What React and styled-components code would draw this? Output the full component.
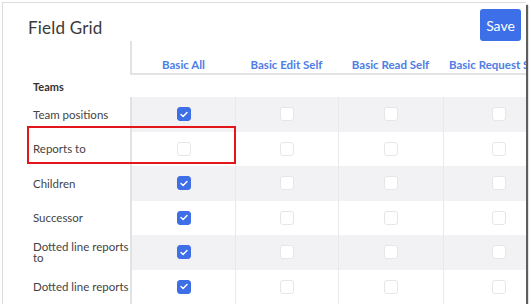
import React from 'react';
import styled, {createGlobalStyle} from "styled-components";

const GlobalStyle = createGlobalStyle`
    html, body {
        margin: 0;
        background: #fff;
    }
    body {
        font-family: "Lato", "Open Sans", sans-serif;
    }
`;

const Frame = styled.div`
    margin: 2px 0 0 2px;
    width: 524px;
    height: 302px;
    border-top: 1px solid #dcdcdc;
    border-left: 1px solid #dcdcdc;
    box-shadow: 2px 3px 1px rgba(40, 40, 40, 0.75);
    background: #fff;
    overflow: hidden;
    position: relative;
    box-sizing: border-box;
`;

const TopBar = styled.div`
    display: flex;
    align-items: flex-start;
    justify-content: space-between;
    height: 38px;
    padding: 6px 5px 0 25px;
    box-sizing: border-box;
`;

const Title = styled.h1`
    margin: 8px 0 0;
    font-size: 17px;
    font-weight: 400;
    color: #3a3a3a;
    letter-spacing: 0.2px;
`;

const SaveButton = styled.button`
    width: 41px;
    height: 32px;
    border: none;
    border-radius: 3px;
    background: #3c6fe8;
    color: #fff;
    font-family: inherit;
    font-size: 14px;
    padding: 0;
`;

const Grid = styled.div`
    display: grid;
    grid-template-columns: 127px 105px 103px 105px 110px;
`;

const HeadCell = styled.div`
    height: 34px;
    display: flex;
    align-items: flex-end;
    justify-content: ${p => (p.$last ? "flex-start" : "center")};
    padding: 0 0 2px ${p => (p.$last ? "6px" : "0")};
    box-sizing: border-box;
    font-size: 11.5px;
    font-weight: 700;
    color: #4d7de6;
    white-space: nowrap;
    border-bottom: ${p => (p.$blank ? "none" : "2px solid #e4e4e6")};
    border-left: ${p => (p.$first ? "2px solid #e2e2e2" : "none")};
    overflow: hidden;
`;

const SectionLabel = styled.div`
    grid-column: 1 / -1;
    height: 22px;
    display: flex;
    align-items: center;
    padding-left: 30px;
    font-size: 11px;
    font-weight: 700;
    color: #333;
`;

const Label = styled.div`
    height: 34.5px;
    display: flex;
    align-items: center;
    padding-left: 30px;
    box-sizing: border-box;
    font-size: 11.5px;
    line-height: 11px;
    color: #444;
    span {
        max-width: 96px;
    }
`;

const Cell = styled.div`
    height: 34.5px;
    display: flex;
    align-items: center;
    justify-content: center;
    background: ${p => (p.$shade ? "#f2f2f4" : "#fff")};
    border-left: ${p => (p.$first ? "2px solid #e2e2e2" : "1px solid #e9e9eb")};
    box-sizing: border-box;
`;

const Box = styled.div`
    width: 14px;
    height: 14px;
    border-radius: 3px;
    box-sizing: border-box;
    background: ${p => (p.$on ? "#3f6fe6" : "#fff")};
    border: 1px solid ${p => (p.$on ? "#3f6fe6" : "#e6e6e8")};
    display: flex;
    align-items: center;
    justify-content: center;
`;

const Highlight = styled.div`
    position: absolute;
    left: 24px;
    top: 123px;
    width: 209px;
    height: 38px;
    border: 2px solid #e5161b;
    box-sizing: border-box;
    pointer-events: none;
`;

const columns = ["Basic All", "Basic Edit Self", "Basic Read Self", "Basic Request Self"];

const rows = [
    {label: "Team positions", on: true},
    {label: "Reports to", on: false},
    {label: "Children", on: true},
    {label: "Successor", on: true},
    {label: "Dotted line reports to", on: true},
    {label: "Dotted line reports", on: true},
];

const Check = () => (
    <svg width="8" height="7" viewBox="0 0 8 7">
        <path d="M1 3.6 L3.1 5.6 L7 1.4" fill="none" stroke="#fff" strokeWidth="1.4" strokeLinecap="round" strokeLinejoin="round"/>
    </svg>
);

const App = () => (
    <>
        <GlobalStyle/>
        <Frame>
            <TopBar>
                <Title>Field Grid</Title>
                <SaveButton>Save</SaveButton>
            </TopBar>
            <Grid>
                <HeadCell $blank/>
                {columns.map((c, i) => (
                    <HeadCell key={c} $first={i === 0} $last={i === columns.length - 1}>{c}</HeadCell>
                ))}
                <SectionLabel>Teams</SectionLabel>
                {rows.map((r, ri) => (
                    <React.Fragment key={r.label}>
                        <Label><span>{r.label}</span></Label>
                        {columns.map((c, ci) => (
                            <Cell key={c} $shade={ri % 2 === 0} $first={ci === 0}>
                                <Box $on={ci === 0 && r.on}>{ci === 0 && r.on && <Check/>}</Box>
                            </Cell>
                        ))}
                    </React.Fragment>
                ))}
            </Grid>
            <Highlight/>
        </Frame>
    </>
);

export default App;
